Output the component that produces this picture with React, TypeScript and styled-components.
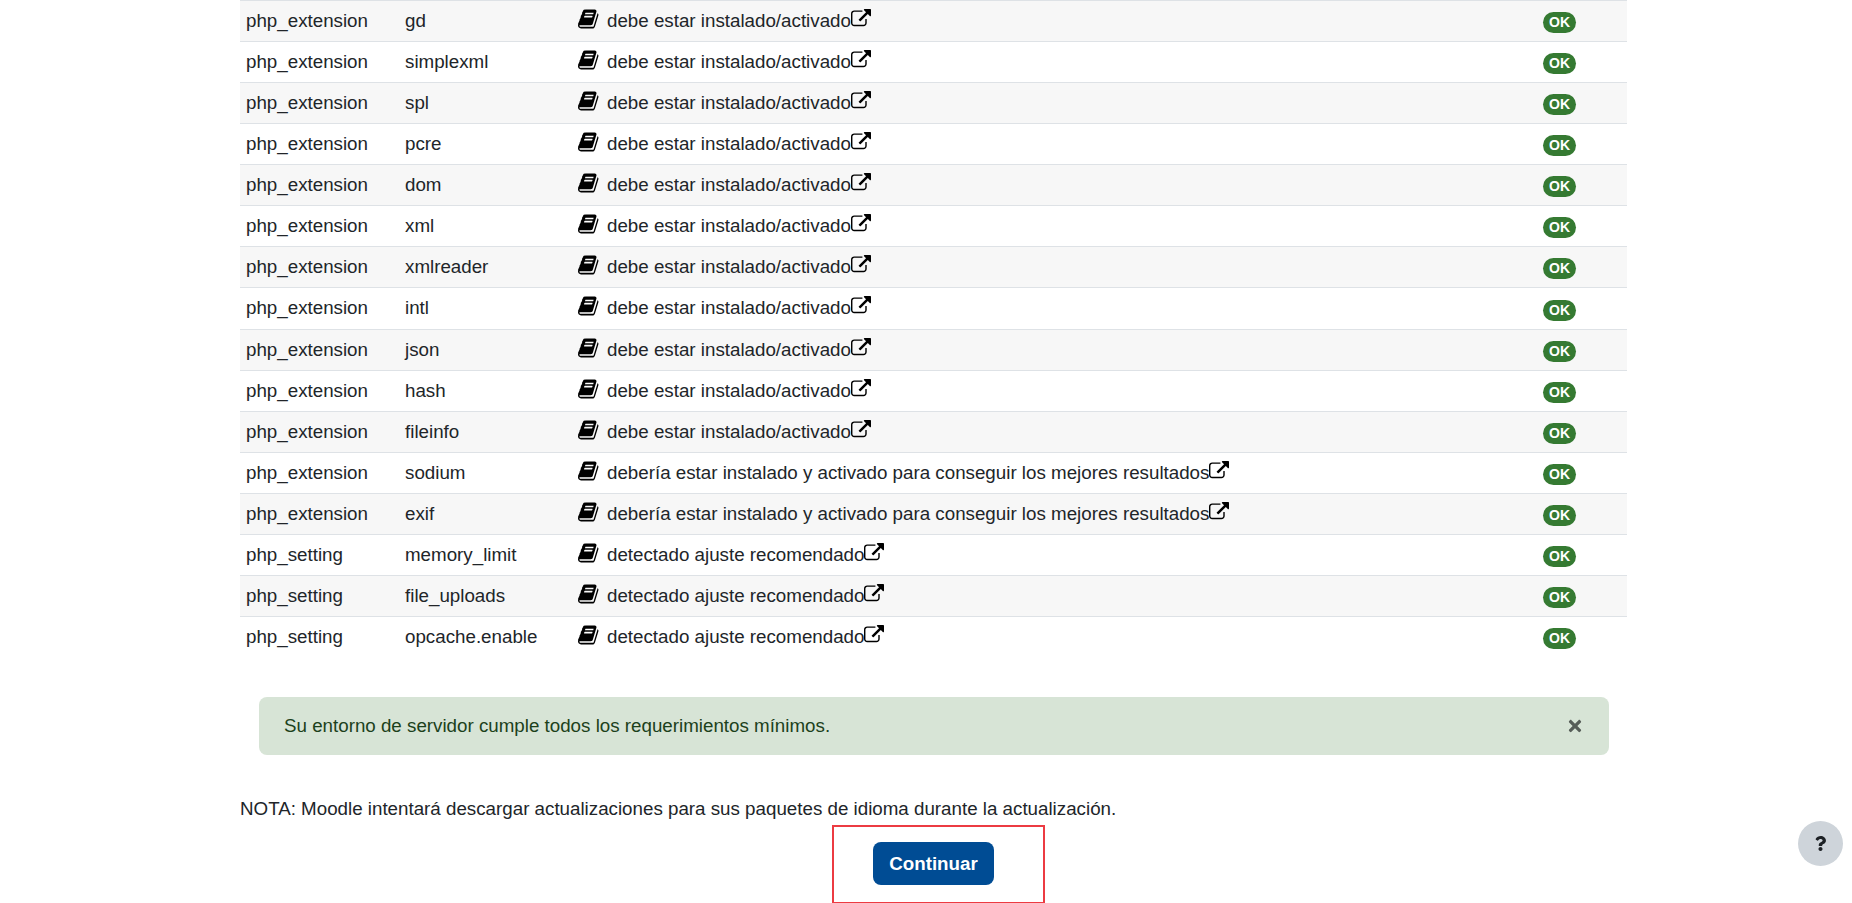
import React from "react";
import styled, { createGlobalStyle } from "styled-components";
import { FaTimes, FaQuestion } from "react-icons/fa";

const Global = createGlobalStyle`
  html, body { margin: 0; padding: 0; height: 903px; overflow: hidden; background: #fff; }
  body { font-family: "Liberation Sans", Arial, sans-serif; font-size: 18.75px; color: #212529; }
`;

const Page = styled.main`
  width: 1387px;
  margin-left: 240px;
`;

const Table = styled.table`
  width: 100%;
  border-collapse: collapse;
  table-layout: fixed;
  font-size: 18.75px;
  line-height: 28px;
`;

const Row = styled.tr<{ $striped: boolean }>`
  height: 41.07px;
  background: ${(p) => (p.$striped ? "#f7f7f7" : "#fff")};
  border-top: 1px solid #dee2e6;
`;

const Cell = styled.td<{ $w: number }>`
  width: ${(p) => p.$w}px;
  padding: 0 0 0 6px;
  box-sizing: border-box;
  vertical-align: middle;
  white-space: nowrap;
`;

const BookIcon = styled.svg`
  width: 22px;
  height: 22px;
  margin: 0 7px 0 0;
  vertical-align: -3px;
  fill: #000;
`;

const LinkIcon = styled.svg`
  width: 20px;
  height: 20px;
  vertical-align: -2px;
  fill: #000;
`;

const Badge = styled.span`
  display: inline-block;
  width: 33px;
  height: 21px;
  margin-top: 1px;
  margin-left: -1px;
  border-radius: 11px;
  background: #357a32;
  color: #fff;
  font-size: 14px;
  font-weight: 700;
  line-height: 21px;
  text-align: center;
  vertical-align: middle;
`;

const Alert = styled.div`
  display: flex;
  align-items: center;
  justify-content: space-between;
  box-sizing: border-box;
  height: 58px;
  margin: 39px 18px 0 19px;
  padding: 0 26px 0 25px;
  border-radius: 8px;
  background: #d7e4d6;
  color: #1c411b;
  font-size: 18.75px;
`;

const CloseIcon = styled(FaTimes)`
  width: 16px;
  height: 18px;
  fill: #565d58;
`;

const Note = styled.p`
  margin: 40px 0 0;
  font-size: 18.75px;
  line-height: 27px;
`;

const Actions = styled.div`
  display: flex;
  margin: 3px 0 0 592px;
`;

const Highlight = styled.div`
  box-sizing: border-box;
  display: flex;
  align-items: flex-start;
  width: 213px;
  height: 79px;
  padding: 15px 0 0 39px;
  border: 2px solid #ec3b42;
`;

const Button = styled.button`
  width: 121px;
  height: 43px;
  padding: 1px 0 0;
  border: 0;
  border-radius: 8px;
  background: #004c94;
  color: #fff;
  font-family: inherit;
  font-size: 18.75px;
  font-weight: 700;
`;

const Help = styled.button`
  position: fixed;
  left: 1798px;
  top: 821px;
  display: flex;
  align-items: center;
  justify-content: center;
  width: 45px;
  height: 45px;
  padding: 0;
  border: 0;
  border-radius: 50%;
  background: #ced4da;
  color: #1d2125;
  font-size: 15px;
`;

const rows: [string, string, number][] = [
  ["php_extension", "gd", 0],
  ["php_extension", "simplexml", 0],
  ["php_extension", "spl", 0],
  ["php_extension", "pcre", 0],
  ["php_extension", "dom", 0],
  ["php_extension", "xml", 0],
  ["php_extension", "xmlreader", 0],
  ["php_extension", "intl", 0],
  ["php_extension", "json", 0],
  ["php_extension", "hash", 0],
  ["php_extension", "fileinfo", 0],
  ["php_extension", "sodium", 1],
  ["php_extension", "exif", 1],
  ["php_setting", "memory_limit", 2],
  ["php_setting", "file_uploads", 2],
  ["php_setting", "opcache.enable", 2],
];

const messages = [
  "debe estar instalado/activado",
  "debería estar instalado y activado para conseguir los mejores resultados",
  "detectado ajuste recomendado",
];

const Book = () => (
  <BookIcon viewBox="0 0 1792 1792">
    <path d="M1639 478q40 57 18 129l-275 906q-19 64-76.5 107.5t-122.5 43.5h-923q-77 0-148.5-53.5t-99.5-131.5q-24-67-2-127 0-4 3-27t4-37q1-8-3-21.5t-3-19.5q2-11 8-21t16.5-23.5 16.5-23.5q23-38 45-91.5t30-91.5q3-10 .5-30t-.5-28q3-11 17-28t17-23q21-36 42-92t25-90q1-9-2.5-32t.5-28q4-13 22-30.5t22-22.5q19-26 42.5-84.5t27.5-96.5q1-8-3-25.5t-2-26.5q2-8 9-18t18-23 17-21q8-12 16.5-30.5t15-35 16-36 19.5-32 26.5-23.5 36-11.5 47.5 5.5l-1 3q38-9 51-9h761q74 0 114 56t18 130l-274 906q-36 119-71.5 153.5t-128.5 34.5h-869q-27 0-38 15-11 16-1 43 24 70 144 70h923q29 0 56-15.5t35-41.5l300-987q7-22 5-57 38 15 59 43zm-1064 2q-4 13 2 22.5t20 9.5h608q13 0 25.5-9.5t16.5-22.5l21-64q4-13-2-22.5t-20-9.5h-608q-13 0-25.5 9.5t-16.5 22.5zm-83 256q-4 13 2 22.5t20 9.5h608q13 0 25.5-9.5t16.5-22.5l21-64q4-13-2-22.5t-20-9.5h-608q-13 0-25.5 9.5t-16.5 22.5z" />
  </BookIcon>
);

const External = () => (
  <LinkIcon viewBox="0 0 1792 1792">
    <path d="M1408 928v320q0 119-84.5 203.5t-203.5 84.5h-832q-119 0-203.5-84.5t-84.5-203.5v-832q0-119 84.5-203.5t203.5-84.5h704q14 0 23 9t9 23v64q0 14-9 23t-23 9h-704q-66 0-113 47t-47 113v832q0 66 47 113t113 47h832q66 0 113-47t47-113v-320q0-14 9-23t23-9h64q14 0 23 9t9 23zm384-864v512q0 26-19 45t-45 19-45-19l-176-176-652 652q-10 10-23 10t-23-10l-114-114q-10-10-10-23t10-23l652-652-176-176q-19-19-19-45t19-45 45-19h512q26 0 45 19t19 45z" />
  </LinkIcon>
);

export default function App() {
  return (
    <Page>
      <Global />
      <Table>
        <tbody>
          {rows.map(([kind, name, msg], i) => (
            <Row key={name} $striped={i % 2 === 0}>
              <Cell $w={159}>{kind}</Cell>
              <Cell $w={173}>{name}</Cell>
              <Cell $w={966}>
                <Book />
                {messages[msg]}
                <External />
              </Cell>
              <Cell $w={89}>
                <Badge>OK</Badge>
              </Cell>
            </Row>
          ))}
        </tbody>
      </Table>
      <Alert>
        Su entorno de servidor cumple todos los requerimientos mínimos.
        <CloseIcon />
      </Alert>
      <Note>NOTA: Moodle intentará descargar actualizaciones para sus paquetes de idioma durante la actualización.</Note>
      <Actions>
        <Highlight>
          <Button>Continuar</Button>
        </Highlight>
      </Actions>
      <Help aria-label="Ayuda">
        <FaQuestion />
      </Help>
    </Page>
  );
}
